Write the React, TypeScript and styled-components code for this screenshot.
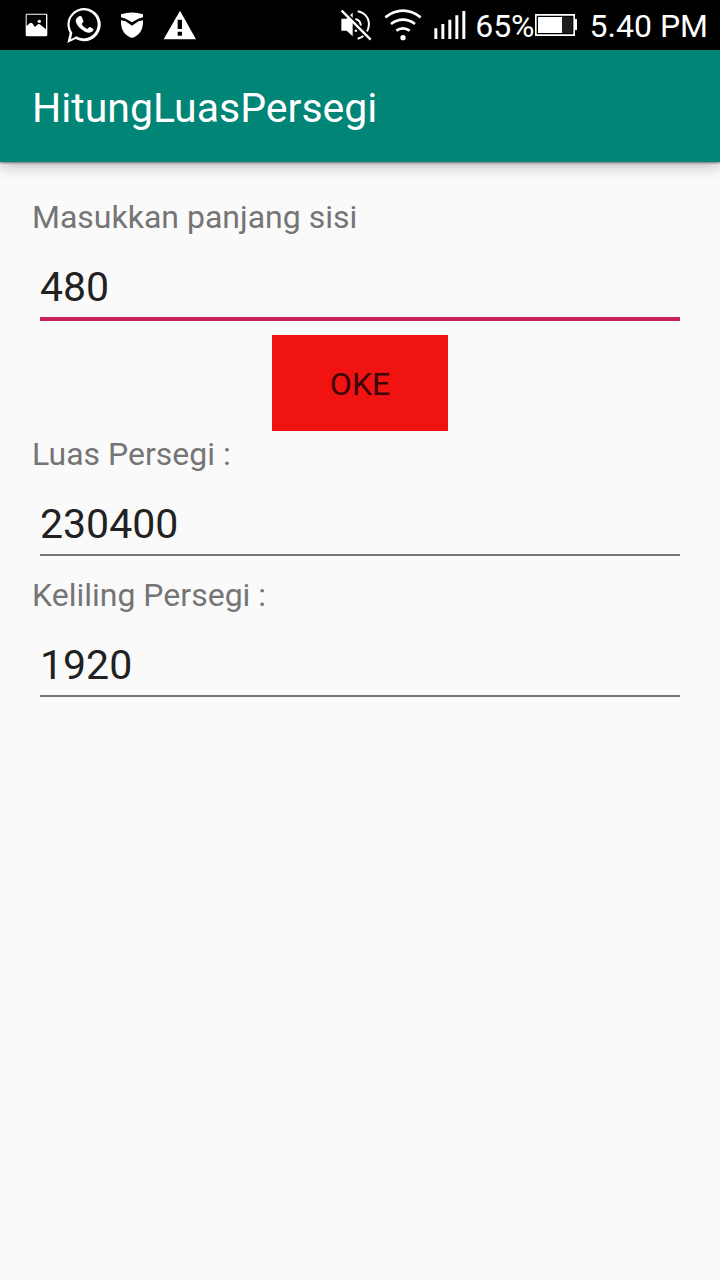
import React, { useState } from "react";
import styled, { createGlobalStyle } from "styled-components";

const GlobalStyle = createGlobalStyle`
  *, *::before, *::after { box-sizing: border-box; }
  body {
    margin: 0;
    background: #fafafa;
    font-family: Roboto, "Noto Sans", sans-serif;
  }
`;

const Screen = styled.div`
  min-height: 100vh;
  display: flex;
  flex-direction: column;
`;

const StatusBar = styled.div`
  display: flex;
  align-items: center;
  justify-content: space-between;
  height: 50px;
  padding: 0 12px 0 24px;
  background: #000;
  color: #fff;
`;

const StatusGroup = styled.div<{ $gap: number }>`
  display: flex;
  align-items: center;
  gap: ${(p) => p.$gap}px;
`;

const Glyph = styled.svg`
  display: block;
  flex: none;
  fill: #fff;
`;

const BatteryLevel = styled.span`
  display: flex;
  align-items: center;
`;

const StatusText = styled.span`
  font-size: 32px;
  line-height: 48px;
  padding-top: 2px;
  white-space: nowrap;
`;

const AppBar = styled.header`
  display: flex;
  align-items: center;
  height: 112px;
  padding: 4px 32px 0;
  background: #008577;
  box-shadow: 0 1px 2px rgba(0, 0, 0, 0.45), 0 4px 14px rgba(0, 0, 0, 0.25);
`;

const Title = styled.h1`
  margin: 0;
  color: #fff;
  font-size: 41px;
  font-weight: 400;
  line-height: 48px;
`;

const Form = styled.form`
  display: flex;
  flex-direction: column;
  padding: 32px;
`;

const Field = styled.div`
  display: flex;
  flex-direction: column;
  height: 141px;
`;

const Label = styled.label`
  color: #757575;
  font-size: 32px;
  line-height: 46px;
`;

const ValueInput = styled.input<{ $active?: boolean }>`
  margin: 0 8px;
  padding: 23px 0 6px;
  border: 0;
  border-bottom: ${(p) => (p.$active ? "4px solid #c7215d" : "2px solid #757575")};
  border-radius: 0;
  outline: 0;
  background: transparent;
  color: #212121;
  font-family: inherit;
  font-size: 41px;
  line-height: 48px;
  height: ${(p) => (p.$active ? 81 : 79)}px;
`;

const SubmitButton = styled.button`
  align-self: center;
  width: 176px;
  height: 96px;
  padding: 2px 0 0;
  border: 0;
  background: #f11212;
  color: #3a0505;
  font-family: inherit;
  font-size: 32px;
  line-height: 48px;
`;

function PictureIcon() {
  return (
    <Glyph width="24" height="24" viewBox="72 39 72 72" aria-hidden="true">
      <path
        fillRule="evenodd"
        d="M81 41H138Q142 41 142 45V104Q142 109 137 109H82Q77 109 77 104V45Q77 41 81 41ZM80 44V78L89 70Q94 66 98 71L105 81L112 74Q117 70 122 75L138 88V44Z"
      />
      <circle cx="118" cy="64" r="5" />
    </Glyph>
  );
}

function ChatIcon() {
  return (
    <Glyph width="36" height="38" viewBox="200 18 108 114" aria-hidden="true">
      <path
        fillRule="evenodd"
        d="M204 129L211 99A50 50 0 1 1 229 117ZM215 118L231 109A42 42 0 1 0 219 98Z"
      />
      <path d="M237 50C241 47 246 48 248 52L252 63C253 67 248 70 247 72C250 79 257 84 264 87C267 85 269 80 272 81L282 87C283 93 277 98 270 98C254 98 231 78 229 62C229 57 233 52 237 50Z" />
    </Glyph>
  );
}

function ShieldIcon() {
  return (
    <Glyph width="24" height="28" viewBox="360 33 72 84" aria-hidden="true">
      <path d="M363 43Q396 32 429 43V52Q422 54 415 56L396 67L377 56Q370 54 363 52Z" />
      <path d="M363 61L377 64L396 77L415 64L429 61C430 84 423 101 404 111Q396 115 388 111C369 101 362 84 363 61Z" />
    </Glyph>
  );
}

function WarningIcon() {
  return (
    <Glyph width="34" height="30" viewBox="486 28 102 90" aria-hidden="true">
      <path fillRule="evenodd" d="M540 30L588 116H491ZM533 57V85H546V57ZM533 93V105H546V93Z" />
    </Glyph>
  );
}

function MutedIcon() {
  return (
    <Glyph width="32" height="32" viewBox="26 30 96 96" aria-hidden="true">
      <path d="M30 59H45L64 41V112L46 95H30Z" />
      <g fill="none" stroke="#fff" strokeWidth="6">
        <path d="M79 37C103 41 116 61 112 82Q111 91 107 97M96 111Q88 117 79 119" />
        <path d="M72 60Q88 63 88 80M70 95H77" />
      </g>
      <path d="M36 32L122 120" stroke="#000" strokeWidth="6" />
      <path d="M31 35L118 122" stroke="#fff" strokeWidth="7" />
    </Glyph>
  );
}

function WifiIcon() {
  return (
    <Glyph width="38" height="34" viewBox="159 26 114 102" aria-hidden="true">
      <g fill="none" stroke="#fff" strokeWidth="8">
        <path d="M163 54Q189 34 216 34Q243 34 269 54" />
        <path d="M180 74Q197 61 216 61Q235 61 252 74" />
        <path d="M196 94Q205 87 216 87Q227 87 236 94" />
      </g>
      <circle cx="216" cy="115" r="8" />
    </Glyph>
  );
}

function SignalIcon() {
  return (
    <Glyph width="32" height="28" viewBox="311 33 96 84" aria-hidden="true">
      <path d="M312 85H321V117H312ZM333 72H342V117H333ZM354 59H363V117H354ZM375 46H384V117H375ZM396 33H405V117H396Z" />
    </Glyph>
  );
}

function BatteryIcon() {
  return (
    <Glyph width="42" height="24" viewBox="45 39 126 72" aria-hidden="true">
      <path fillRule="evenodd" d="M45 42H165V57H171V90H165V108H45ZM50 47V103H160V47Z" />
      <path d="M54 51H126V99H54Z" />
      <path d="M126 51H157V99H126Z" fill="#1c1c1c" />
    </Glyph>
  );
}

export default function App() {
  const [side, setSide] = useState("480");
  const [area, setArea] = useState("230400");
  const [perimeter, setPerimeter] = useState("1920");

  const calculate = (event: React.FormEvent) => {
    event.preventDefault();
    const n = Number(side);
    setArea(String(n * n));
    setPerimeter(String(n * 4));
  };

  return (
    <Screen>
      <GlobalStyle />
      <StatusBar>
        <StatusGroup $gap={18}>
          <PictureIcon />
          <ChatIcon />
          <ShieldIcon />
          <WarningIcon />
        </StatusGroup>
        <StatusGroup $gap={13}>
          <StatusGroup $gap={9}>
            <StatusGroup $gap={12}>
              <MutedIcon />
              <WifiIcon />
              <SignalIcon />
            </StatusGroup>
            <BatteryLevel>
              <StatusText>65%</StatusText>
              <BatteryIcon />
            </BatteryLevel>
          </StatusGroup>
          <StatusText>5.40 PM</StatusText>
        </StatusGroup>
      </StatusBar>
      <AppBar>
        <Title>HitungLuasPersegi</Title>
      </AppBar>
      <Form onSubmit={calculate}>
        <Field>
          <Label htmlFor="side">Masukkan panjang sisi</Label>
          <ValueInput id="side" $active value={side} onChange={(e) => setSide(e.target.value)} />
        </Field>
        <SubmitButton type="submit">OKE</SubmitButton>
        <Field>
          <Label htmlFor="area">Luas Persegi :</Label>
          <ValueInput id="area" value={area} onChange={(e) => setArea(e.target.value)} />
        </Field>
        <Field>
          <Label htmlFor="perimeter">Keliling Persegi :</Label>
          <ValueInput id="perimeter" value={perimeter} onChange={(e) => setPerimeter(e.target.value)} />
        </Field>
      </Form>
    </Screen>
  );
}
